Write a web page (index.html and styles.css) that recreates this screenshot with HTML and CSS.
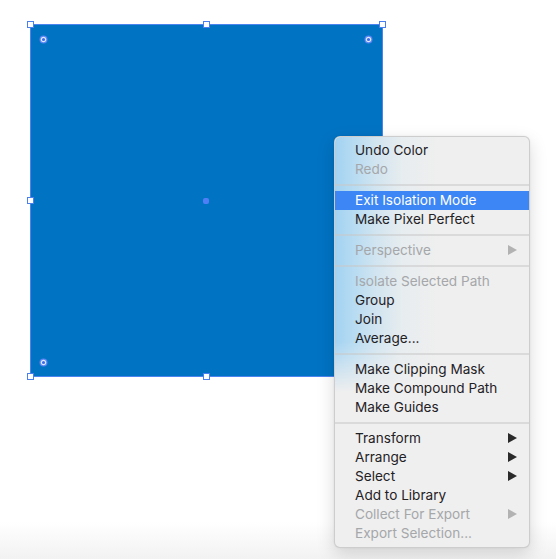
FILE: index.html
```html
<!DOCTYPE html>
<html>
<head>
<meta charset="utf-8">
<link rel="stylesheet" href="styles.css">
</head>
<body>
<div class="canvas">
  <div class="shape">
    <span class="handle h-tl"></span>
    <span class="handle h-tm"></span>
    <span class="handle h-tr"></span>
    <span class="handle h-ml"></span>
    <span class="handle h-mr"></span>
    <span class="handle h-bl"></span>
    <span class="handle h-bm"></span>
    <span class="handle h-br"></span>
    <span class="center-dot"></span>
    <svg class="widget w-tl" width="9" height="9" viewBox="0 0 9 9"><circle cx="4.5" cy="4.5" r="4" fill="#5a86f2"/><circle cx="4.5" cy="4.5" r="2.2" fill="#3f6fe8" stroke="#dfe8ff" stroke-width="1.2"/></svg>
    <svg class="widget w-tr" width="9" height="9" viewBox="0 0 9 9"><circle cx="4.5" cy="4.5" r="4" fill="#5a86f2"/><circle cx="4.5" cy="4.5" r="2.2" fill="#3f6fe8" stroke="#dfe8ff" stroke-width="1.2"/></svg>
    <svg class="widget w-bl" width="9" height="9" viewBox="0 0 9 9"><circle cx="4.5" cy="4.5" r="4" fill="#5a86f2"/><circle cx="4.5" cy="4.5" r="2.2" fill="#3f6fe8" stroke="#dfe8ff" stroke-width="1.2"/></svg>
  </div>

  <div class="menu">
    <div class="item">Undo Color</div>
    <div class="item disabled">Redo</div>
    <div class="sep"></div>
    <div class="item active">Exit Isolation Mode</div>
    <div class="item">Make Pixel Perfect</div>
    <div class="sep"></div>
    <div class="item disabled sub">Perspective</div>
    <div class="sep"></div>
    <div class="item disabled">Isolate Selected Path</div>
    <div class="item">Group</div>
    <div class="item">Join</div>
    <div class="item">Average...</div>
    <div class="sep"></div>
    <div class="item">Make Clipping Mask</div>
    <div class="item">Make Compound Path</div>
    <div class="item">Make Guides</div>
    <div class="sep"></div>
    <div class="item sub">Transform</div>
    <div class="item sub">Arrange</div>
    <div class="item sub">Select</div>
    <div class="item">Add to Library</div>
    <div class="item disabled sub">Collect For Export</div>
    <div class="item disabled">Export Selection...</div>
  </div>
</div>
</body>
</html>
```

FILE: styles.css
```css
* { box-sizing: border-box; }
html, body {
  margin: 0;
  padding: 0;
}
body {
  width: 556px;
  height: 559px;
  overflow: hidden;
  background: linear-gradient(to bottom, #ffffff 0, #ffffff 522px, #f2f2f2 559px);
  font-family: "Inter", "Helvetica Neue", Arial, sans-serif;
}
.canvas {
  position: relative;
  width: 556px;
  height: 559px;
}
.shape {
  position: absolute;
  left: 30px;
  top: 24px;
  width: 353px;
  height: 353px;
  background: #0073c3;
  border: 1px solid #4c84ef;
}
.handle {
  position: absolute;
  width: 7px;
  height: 7px;
  background: #fff;
  border: 1px solid #4a7ff0;
}
.h-tl { left: -4px; top: -4px; }
.h-tm { left: 172px; top: -4px; }
.h-tr { right: -4px; top: -4px; }
.h-ml { left: -4px; top: 172px; }
.h-mr { right: -4px; top: 172px; }
.h-bl { left: -4px; bottom: -4px; }
.h-bm { left: 172px; bottom: -4px; }
.h-br { right: -4px; bottom: -4px; }
.center-dot {
  position: absolute;
  left: 172px;
  top: 173px;
  width: 6px;
  height: 6px;
  border-radius: 2px;
  background: #4f7ff6;
}
.widget { position: absolute; display: block; }
.w-tl { left: 8px; top: 10px; }
.w-tr { left: 333px; top: 10px; }
.w-bl { left: 8px; top: 333px; }

.menu {
  position: absolute;
  left: 334px;
  top: 136px;
  width: 196px;
  padding: 4px 0;
  display: flex;
  flex-direction: column;
  background: #efefef;
  border: 1px solid rgba(0, 0, 0, 0.14);
  border-radius: 6px;
  box-shadow: 0 6px 18px rgba(0, 0, 0, 0.15), 0 0 2px rgba(0,0,0,0.08);
}
.menu::before {
  content: "";
  position: absolute;
  left: 0;
  top: 0;
  width: 110px;
  height: 255px;
  border-top-left-radius: 5px;
  background: linear-gradient(to right, #a2d2f2 0, #b6dbf2 18px, #d0e4f0 40px, #e6ecef 66px, rgba(239,239,239,0) 100px);
  -webkit-mask-image: linear-gradient(to bottom, #000 0, #000 205px, transparent 255px);
  mask-image: linear-gradient(to bottom, #000 0, #000 205px, transparent 255px);
}
.item {
  position: relative;
  height: 19px;
  line-height: 19px;
  padding: 0 12px 1px 20px;
  font-size: 13.6px;
  color: #1f2125;
  display: flex;
  justify-content: space-between;
  align-items: center;
  white-space: nowrap;
}
.item.disabled { color: #a5a7aa; }
.item.active {
  background: #3d86f6;
  color: #ffffff;
}
.item.sub::after {
  content: "";
  width: 0;
  height: 0;
  border-top: 5px solid transparent;
  border-bottom: 5px solid transparent;
  border-left: 9px solid #2a2a2a;
}
.item.disabled.sub::after { border-left-color: #b2b2b2; }
.sep {
  position: relative;
  height: 2px;
  margin: 5px 0;
  background: rgba(200, 200, 200, 0.55);
}
```
